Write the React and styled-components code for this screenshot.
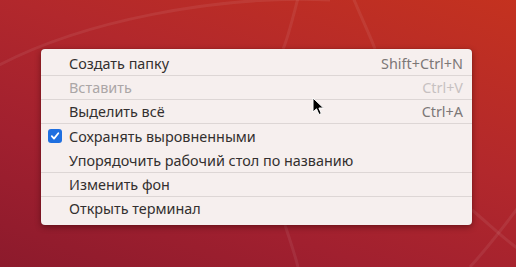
import React from "react";
import styled, { createGlobalStyle } from "styled-components";

const Global = createGlobalStyle`
  html, body { margin: 0; padding: 0; }
  body { width: 516px; height: 267px; overflow: hidden; }
`;

const Desktop = styled.div`
  position: relative;
  width: 516px;
  height: 267px;
  box-sizing: border-box;
  padding: 49px 0 0 41px;
  overflow: hidden;
  background: linear-gradient(200deg, #c4321f 0%, #b2282c 40%, #a1202f 70%, #8c1a2c 100%);
  font-family: "Noto Sans", "DejaVu Sans", sans-serif;
`;

const Arcs = styled.svg`
  position: absolute;
  inset: 0;
  pointer-events: none;
`;

const Menu = styled.div`
  position: relative;
  width: 431px;
  box-sizing: border-box;
  padding: 3px 0 4px;
  background: #f6efee;
  border-radius: 4px;
  box-shadow: 0 2px 6px rgba(40, 0, 0, 0.45), 0 0 1px rgba(40, 0, 0, 0.4);
`;

const Row = styled.div`
  display: flex;
  align-items: center;
  box-sizing: border-box;
  height: ${(p) => (p.$tall ? 25 : 24)}px;
  padding: 0 9px 0 28px;
  border-bottom: 1px solid ${(p) => (p.$sep ? "#ddd6d5" : "transparent")};
  font-size: 14.4px;
  color: ${(p) => (p.$disabled ? "#aba6a6" : "#332f2f")};
`;

const Check = styled.span`
  width: 28px;
  margin-left: -28px;
  display: flex;
  justify-content: flex-start;
  padding-left: 7px;
  box-sizing: border-box;
`;

const Box = styled.span`
  width: 14px;
  height: 14px;
  border-radius: 3px;
  background: #1f6fe0;
  display: flex;
  align-items: center;
  justify-content: center;
`;

const Label = styled.span`
  flex: 1;
  white-space: nowrap;
`;

const Accel = styled.span`
  color: ${(p) => (p.$disabled ? "#c7c1c1" : "#7c7777")};
  white-space: nowrap;
`;

const Cursor = styled.svg`
  position: absolute;
  left: 312px;
  top: 97px;
`;

const items = [
  { label: "Создать папку", accel: "Shift+Ctrl+N", sep: true },
  { label: "Вставить", accel: "Ctrl+V", sep: true, disabled: true },
  { label: "Выделить всё", accel: "Ctrl+A", sep: true },
  { label: "Сохранять выровненными", check: true, tall: true },
  { label: "Упорядочить рабочий стол по названию", sep: true },
  { label: "Изменить фон", sep: true },
  { label: "Открыть терминал" },
];

export default function App() {
  return (
    <>
      <Global />
      <Desktop>
        <Arcs width="516" height="267" viewBox="0 0 516 267">
          <g fill="none" stroke="rgba(255,255,255,0.07)" strokeWidth="3">
            <path d="M-10 70 C 80 20, 220 -5, 330 0" />
            <path d="M300 -10 C 290 30, 285 45, 283 49" />
            <path d="M350 -10 C 360 15, 370 35, 375 49" />
            <path d="M472 210 C 490 225, 505 240, 520 250" />
            <path d="M470 267 C 490 245, 505 225, 520 205" />
            <path d="M285 225 C 290 240, 295 255, 298 267" />
          </g>
        </Arcs>
        <Menu>
          {items.map((it) => (
            <Row key={it.label} $sep={it.sep} $disabled={it.disabled} $tall={it.tall}>
              {it.check && (
                <Check>
                  <Box>
                    <svg width="10" height="10" viewBox="0 0 10 10">
                      <path d="M1.8 5.2 L4 7.6 L8.3 2.2" fill="none" stroke="#fff" strokeWidth="1.8" strokeLinecap="round" strokeLinejoin="round" />
                    </svg>
                  </Box>
                </Check>
              )}
              <Label>{it.label}</Label>
              {it.accel && <Accel $disabled={it.disabled}>{it.accel}</Accel>}
            </Row>
          ))}
        </Menu>
        <Cursor width="14" height="20" viewBox="0 0 14 20">
          <path d="M1 1 L1 15 L4.5 11.8 L7 17.5 L9.3 16.5 L6.9 11 L11.5 11 Z" fill="#000" stroke="#fff" strokeWidth="1" strokeLinejoin="round" />
        </Cursor>
      </Desktop>
    </>
  );
}
